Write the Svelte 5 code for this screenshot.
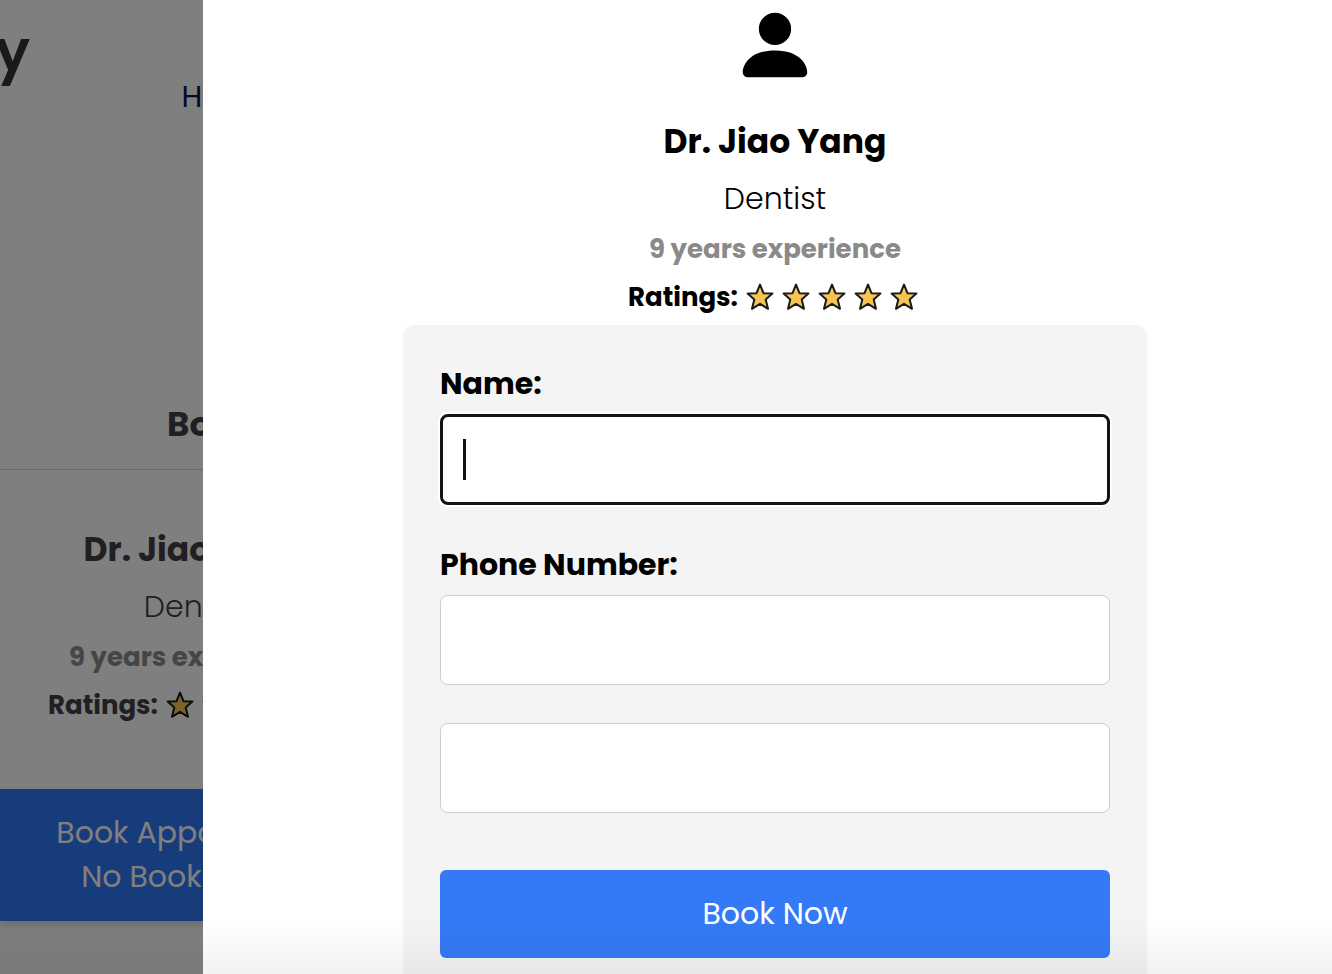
<script>
  let name = $state('');
  let phone = $state('');
  let slot = $state('');
</script>

{#snippet star()}
  <svg class="star" viewBox="0 0 28 28" aria-hidden="true">
    <path d="M14 1.6L17.5 10.2L26.4 10.6L19.7 16.4L22 25.8L14 20.8L6 25.8L8.3 16.4L1.6 10.6L10.5 10.2Z" />
  </svg>
{/snippet}

{#snippet doctor()}
  <h2>Dr. Jiao Yang</h2>
  <p class="speciality">Dentist</p>
  <p class="experience">9 years experience</p>
  <div class="ratings">
    <span>Ratings:</span>
    <span class="stars">
      {#each Array(5) as _}{@render star()}{/each}
    </span>
  </div>
{/snippet}

<div class="layout">
  <div class="page">
    <header>
      <div class="logo">y</div>
      <a class="home" href="#home">Home</a>
    </header>
    <h2 class="title">Booking</h2>
    <section class="card">
      {@render doctor()}
      <button class="open" type="button">Book Appointment<br />No Booking Fee</button>
    </section>
  </div>

  <div class="modal" role="dialog" aria-label="Book appointment">
    <svg class="avatar" viewBox="0 0 16 16" aria-hidden="true">
      <path d="M3 14s-1 0-1-1 1-4 6-4 6 3 6 4-1 1-1 1H3zm5-6a3 3 0 1 0 0-6 3 3 0 0 0 0 6z" />
    </svg>
    {@render doctor()}
    <form>
      <label for="name">Name:</label>
      <div class="field active">
        <input id="name" type="text" bind:value={name} />
        <span class="caret"></span>
      </div>
      <label for="phone">Phone Number:</label>
      <div class="field">
        <input id="phone" type="tel" bind:value={phone} />
      </div>
      <div class="field">
        <input type="text" aria-label="Appointment slot" bind:value={slot} />
      </div>
      <button class="submit" type="button">Book Now</button>
    </form>
  </div>
</div>

<style>
  :global(body) {
    font-family: Poppins, Inter, sans-serif;
    color: #000;
    background: #fff;
  }

  .layout {
    position: relative;
    display: grid;
    grid-template-columns: 203px minmax(0, 1fr);
    height: 100vh;
    overflow: hidden;
  }

  .layout::after {
    content: '';
    position: absolute;
    inset: auto 0 0;
    height: 56px;
    background: linear-gradient(transparent, rgba(0, 0, 0, 0.05));
    pointer-events: none;
  }

  h2,
  p {
    margin: 0;
    white-space: nowrap;
  }

  h2 {
    font-size: 33px;
    line-height: 52px;
    font-weight: 700;
  }

  .speciality {
    margin-top: 9px;
    font-size: 30px;
    line-height: 44px;
    font-weight: 300;
  }

  .experience {
    margin-top: 8px;
    font-size: 26px;
    line-height: 40px;
    font-weight: 700;
    color: #8a8a8a;
  }

  .ratings {
    display: flex;
    align-items: center;
    justify-content: center;
    gap: 8px;
    margin-top: 8px;
    padding-right: 4px;
    font-size: 26px;
    line-height: 40px;
    font-weight: 700;
  }

  .stars {
    display: flex;
    gap: 8px;
  }

  .star {
    flex: none;
    width: 28px;
    height: 28px;
    fill: #f6c453;
    stroke: #1a1a1a;
    stroke-width: 2;
    stroke-linejoin: round;
  }

  .page {
    position: relative;
    overflow: hidden;
    background: #fff;
    color: #414146;
  }

  .page::after {
    content: '';
    position: absolute;
    inset: 0;
    background: rgba(0, 0, 0, 0.5);
  }

  header {
    display: flex;
    justify-content: space-between;
    height: 380px;
    width: 271px;
  }

  .logo {
    margin-left: -5px;
    font-size: 58px;
    line-height: 102px;
    font-weight: 600;
    color: #333;
  }

  .home {
    font-size: 30px;
    line-height: 44px;
    padding-top: 75px;
    color: #0b1440;
    text-decoration: none;
  }

  .title {
    padding: 18px 0 19px 167px;
    border-bottom: 1px solid #d4d4d4;
    font-size: 34px;
  }

  .card {
    width: 390px;
    padding-top: 54px;
    text-align: center;
  }

  .open {
    display: block;
    width: 100%;
    margin-top: 64px;
    padding: 22px 0;
    border: 0;
    background: #2f78f6;
    color: #fff;
    font: 400 30px/44px Poppins, Inter, sans-serif;
    box-shadow: 0 4px 8px rgba(0, 0, 0, 0.15);
  }

  .modal {
    display: flex;
    flex-direction: column;
    align-items: center;
    padding: 2px 0 0 15px;
    background: #fff;
  }

  .avatar {
    flex: none;
    width: 86px;
    height: 86px;
    margin-bottom: 28px;
  }

  form {
    flex: none;
    box-sizing: border-box;
    display: flex;
    flex-direction: column;
    width: 100%;
    max-width: 744px;
    margin-top: 8px;
    padding: 37px;
    border-radius: 12px;
    background: #f4f4f4;
  }

  label {
    font-size: 30px;
    line-height: 44px;
    font-weight: 700;
    margin-bottom: 8px;
  }

  .field {
    position: relative;
    margin-bottom: 38px;
  }

  input {
    display: block;
    box-sizing: border-box;
    width: 100%;
    height: 90px;
    padding: 0 24px;
    border: 1px solid #ccc;
    border-radius: 8px;
    outline: 0;
    background: #fff;
    font: 400 30px/44px Poppins, Inter, sans-serif;
  }

  .active input {
    height: 91px;
    border: 3px solid #131414;
    box-shadow: 0 0 0 2px #fff;
  }

  .caret {
    position: absolute;
    top: 25px;
    left: 23px;
    width: 3px;
    height: 41px;
    background: #111;
  }

  .submit {
    height: 88px;
    margin-top: 19px;
    border: 0;
    border-radius: 6px;
    background: #347af6;
    color: #fff;
    font: 400 30px/44px Poppins, Inter, sans-serif;
  }
</style>
